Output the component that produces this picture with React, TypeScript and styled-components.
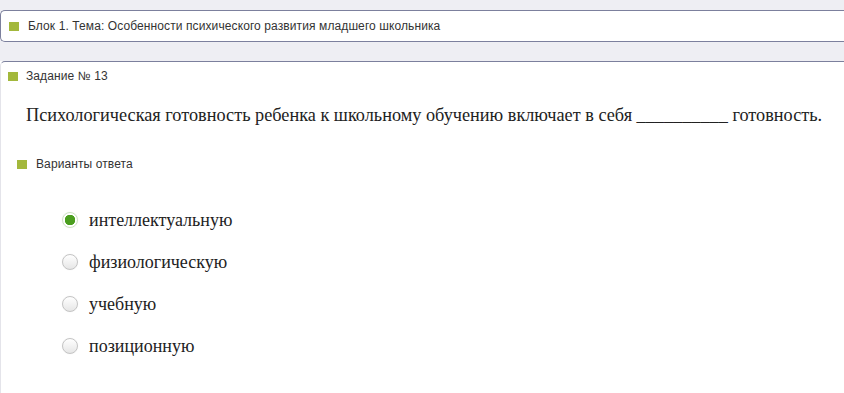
import styled, { createGlobalStyle } from "styled-components";

const GlobalStyle = createGlobalStyle`
	html, body {
		margin: 0;
		padding: 0;
		background: #ffffff;
	}
	body {
		width: 844px;
		height: 393px;
		overflow: hidden;
	}
`;

const options = [
	{ label: "интеллектуальную", checked: true },
	{ label: "физиологическую", checked: false },
	{ label: "учебную", checked: false },
	{ label: "позиционную", checked: false },
];

export default function App() {
	return (
		<>
			<GlobalStyle />
			<Page>
				<Header>
					<BlockBar>
						<Marker />
						<SmallText>
							Блок 1. Тема: Особенности психического развития младшего
							школьника
						</SmallText>
					</BlockBar>
				</Header>
				<Panel>
					<TaskTitle>
						<Marker />
						<SmallText>Задание № 13</SmallText>
					</TaskTitle>
					<Question>
						Психологическая готовность ребенка к школьному обучению
						включает в себя __________ готовность.
					</Question>
					<AnswersTitle>
						<Marker />
						<SmallText>Варианты ответа</SmallText>
					</AnswersTitle>
					<Options>
						{options.map((o) => (
							<Option key={o.label}>
								<Radio $checked={o.checked} />
								<OptionText>{o.label}</OptionText>
							</Option>
						))}
					</Options>
				</Panel>
			</Page>
		</>
	);
}

const Page = styled.div`
	display: flex;
	flex-direction: column;
	font-family: "Liberation Sans", Arial, sans-serif;
	color: #333333;
`;

const Header = styled.div`
	background: #eeeef3;
	padding: 10px 0 19px;
`;

const BlockBar = styled.div`
	display: flex;
	align-items: center;
	gap: 9px;
	height: 30px;
	padding-left: 8px;
	background: #ffffff;
	border: 1px solid #7c809d;
	border-right: none;
	border-radius: 5px 0 0 5px;
`;

const Marker = styled.span`
	display: block;
	width: 10px;
	height: 9px;
	background: #a3b83c;
	flex-shrink: 0;
`;

const SmallText = styled.span`
	font-size: 12px;
	line-height: 14px;
	letter-spacing: 0.1px;
	color: #333333;
`;

const Panel = styled.div`
	border-top: 1px solid #7c809d;
	border-left: 1px solid #e4e4ea;
	border-radius: 5px 0 0 0;
	background: #ffffff;
	display: flex;
	flex-direction: column;
	height: 340px;
`;

const TaskTitle = styled.div`
	display: flex;
	align-items: center;
	gap: 8px;
	padding: 7px 0 0 7px;
	height: 14px;
`;

const Question = styled.p`
	margin: 21px 0 0 25px;
	font-family: "Liberation Serif", "Times New Roman", serif;
	font-size: 18.25px;
	line-height: 22px;
	color: #222222;
	white-space: nowrap;
`;

const AnswersTitle = styled.div`
	display: flex;
	align-items: center;
	gap: 9px;
	margin: 31px 0 0 16px;
	height: 14px;
`;

const Options = styled.div`
	display: flex;
	flex-direction: column;
	gap: 20px;
	margin: 38px 0 0 61px;
`;

const Option = styled.div`
	display: flex;
	align-items: center;
	gap: 11px;
	height: 22px;
`;

const Radio = styled.span<{ $checked: boolean }>`
	width: 14px;
	height: 14px;
	border-radius: 50%;
	flex-shrink: 0;
	background: ${({ $checked }) =>
		$checked
			? "radial-gradient(circle, #4b9e1f 0 5px, #ffffff 5.5px)"
			: "linear-gradient(#ffffff, #e6e6e6)"};
	border: 1px solid ${({ $checked }) => ($checked ? "#cfe3c4" : "#c4c4c4")};
	box-shadow: 0 0 1px rgba(0, 0, 0, 0.1);
`;

const OptionText = styled.span`
	font-family: "Liberation Serif", "Times New Roman", serif;
	font-size: 18px;
	line-height: 22px;
	color: #222222;
`;
